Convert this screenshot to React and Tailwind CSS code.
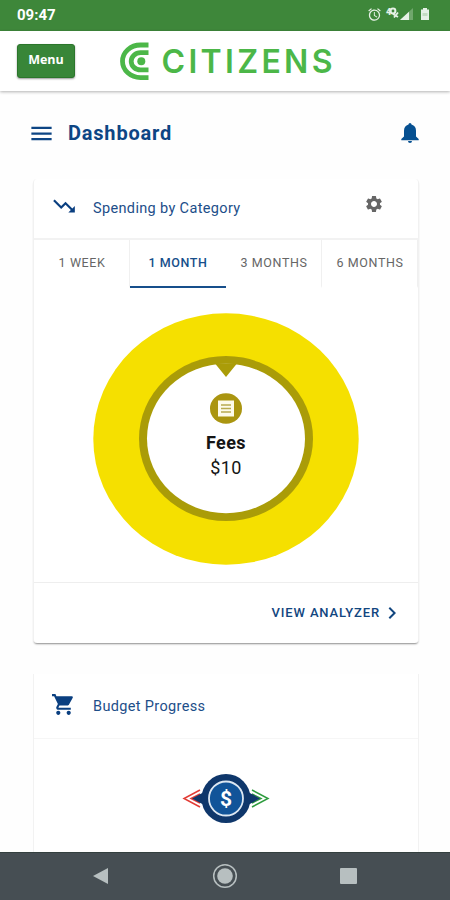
import React from 'react';
import {
  MdAlarm,
  MdMenu,
  MdTrendingDown,
  MdSettings,
  MdChevronRight,
  MdShoppingCart,
} from 'react-icons/md';

const ranges = ['1 WEEK', '1 MONTH', '3 MONTHS', '6 MONTHS'];

function StatusBar() {
  return (
    <div className="flex h-[31px] shrink-0 items-center justify-between bg-[#3e873a] pb-[3px] pl-[17px] pr-[20px] text-white">
      <span className="mt-[2px] text-[15px] font-bold leading-none">09:47</span>
      <div className="flex items-center text-[#e6f1e6]">
        <MdAlarm className="h-[15px] w-[15px]" />
        <svg className="ml-[3px] h-[16px] w-[30px]" viewBox="0 0 30 16">
          <text x="1" y="9" fontSize="9" fontWeight="900" fill="currentColor">4</text>
          <circle cx="8" cy="5" r="2.400" fill="none" stroke="currentColor" strokeWidth="2" />
          <path d="M8 8l5 3M13 6.500l-4 5" stroke="currentColor" strokeWidth="1.800" />
          <path d="M15 14L28 2V14Z" fill="currentColor" opacity="0.3" />
          <path d="M15 14L24 5.700V14Z" fill="currentColor" />
        </svg>
        <svg className="ml-[5px] h-[14px] w-[10px]" viewBox="0 0 10 14">
          <path d="M3 1h4v1.500h2V13H1V2.500h2z" fill="currentColor" />
          <path d="M2.500 6h5v3h-5z" fill="#c3dcc2" />
        </svg>
      </div>
    </div>
  );
}

function Header() {
  return (
    <header className="flex h-[60px] shrink-0 items-center bg-white pl-[17px] shadow-[0_1px_3px_rgba(0,0,0,0.3)]">
      <button className="h-[34px] w-[58px] rounded-[3px] border border-[#2b762b] bg-[#388638] pb-[2px] font-['Open_Sans',sans-serif] text-[12.500px] font-bold text-white shadow-[0_1px_2px_rgba(0,0,0,0.4)]">
        Menu
      </button>
      <svg className="ml-[44px] h-[40px] w-[216px]" viewBox="0 0 216 40" fill="none">
        <g stroke="#4cb748" strokeWidth="4.800">
          <path d="M29.500 4H21.500A18 16.300 0 0 0 21.500 36.600H29.500" />
          <path d="M29.500 11.700H21.500A9.300 8.600 0 0 0 21.500 28.900H29.500" />
        </g>
        <circle cx="22.300" cy="20.300" r="4" fill="#4cb748" />
        <text
          x="42.500"
          y="31.700"
          textLength="171"
          fontFamily="Inter, sans-serif"
          fontSize="32"
          fontWeight="600"
          fill="#4cb748"
        >
          CITIZENS
        </text>
      </svg>
    </header>
  );
}

function SpendingDonut() {
  return (
    <div className="relative h-[252px] w-[266px]">
      <svg className="h-full w-full" viewBox="0 0 266 252">
        <ellipse cx="133" cy="126" rx="132.700" ry="125.700" fill="#f5e000" />
        <ellipse cx="133" cy="125.500" rx="87" ry="82.500" fill="#aa9c08" />
        <ellipse cx="133" cy="125.500" rx="79" ry="74.700" fill="#fff" />
        <path d="M122 50.500H144L133 64Z" fill="#aa9c08" />
      </svg>
      <div className="absolute inset-x-0 top-[80px] flex flex-col items-center text-[#151515]">
        <svg className="h-[31px] w-[32px]" viewBox="0 0 32 31">
          <ellipse cx="16" cy="15.500" rx="16" ry="15.300" fill="#aa9510" />
          <rect x="8" y="7.500" width="16" height="16" fill="#fdfbea" />
          <path d="M11 12h10M11 15.500h10M11 19h10" stroke="#b8aa50" strokeWidth="1.500" />
        </svg>
        <span className="mt-[6px] text-[18px] font-bold leading-[25px] tracking-[0.400px]">Fees</span>
        <span className="text-[18px] leading-[25px] tracking-[0.400px]">$10</span>
      </div>
    </div>
  );
}

function SpendingCard() {
  return (
    <section className="-ml-px flex h-[464px] w-[386px] shrink-0 flex-col rounded-[4px] border-x border-[#f1f1f1] bg-white shadow-[0_2px_2px_-1px_rgba(0,0,0,0.45)]">
      <div className="flex h-[59px] items-center pl-[17px] pr-[34px] text-[#1d4e89]">
        <MdTrendingDown className="mt-[-6px] h-[26px] w-[26px] text-[#0a3f80]" />
        <h2 className="mt-px ml-[16px] flex-1 text-[14.500px] tracking-[0.350px]">Spending by Category</h2>
        <MdSettings className="mt-[-9px] h-[20px] w-[20px] text-[#666]" />
      </div>
      <div className="flex h-[50px] border-t-2 border-[#f2f2f2]">
        {ranges.map((range) => (
          <button
            key={range}
            className={
              range === '1 MONTH'
                ? 'w-[96px] border-b-2 border-[#174f8b] pt-px text-[12.500px] font-medium tracking-[0.600px] text-[#174f8b]'
                : 'w-[96px] border-b-2 border-b-transparent border-r border-r-[#f0f0f0] pt-px pl-px text-[12.500px] tracking-[0.600px] text-[#666]'
            }
          >
            {range}
          </button>
        ))}
      </div>
      <div className="flex flex-1 justify-center pt-[25px]">
        <SpendingDonut />
      </div>
      <div className="flex h-[61px] items-center justify-end border-t border-[#eee] pr-[14px] text-[#12467f]">
        <span className="text-[13px] font-medium tracking-[0.850px]">VIEW ANALYZER</span>
        <MdChevronRight className="h-[24px] w-[24px]" />
      </div>
    </section>
  );
}

function BudgetCard() {
  return (
    <section className="-ml-px mt-[31px] flex h-[178px] w-[386px] shrink-0 flex-col border-x border-[#f2f2f2] bg-white">
      <div className="flex h-[65px] items-center border-b border-[#f6f6f6] pl-[17px]">
        <MdShoppingCart className="mt-[-3px] h-[25px] w-[25px] text-[#0a3f80]" />
        <h2 className="mt-[2px] ml-[17px] text-[14.500px] tracking-[0.350px] text-[#1d4e89]">Budget Progress</h2>
      </div>
      <div className="flex justify-center pt-[34px] pr-[1px]">
        <svg className="h-[52px] w-[92px]" viewBox="0 0 92 52">
          <path d="M20 17L4 25.500L20 34M20 21L11 25.500L20 30" fill="none" stroke="#e23b35" strokeWidth="1.500" />
          <path d="M72 17L88 25.500L72 34M72 21L81 25.500L72 30" fill="none" stroke="#2d9b3d" strokeWidth="1.500" />
          <path d="M12 25.500L26 18V33ZM80 25.500L66 18V33Z" fill="#0f376b" />
          <circle cx="46" cy="25.500" r="24.500" fill="#0f376b" />
          <circle cx="46" cy="25.500" r="17" fill="#115499" stroke="#dce7f2" strokeWidth="1.800" />
          <text x="46" y="33" textAnchor="middle" fontSize="21" fontWeight="700" fill="#fff">$</text>
        </svg>
      </div>
    </section>
  );
}

function NavigationBar() {
  return (
    <nav className="flex h-[48px] shrink-0 items-center border-t border-[#34403f] bg-[#464e53] pb-px pl-[93px] text-[#b7bfc0]">
      <svg className="h-[18px] w-[16px]" viewBox="0 0 16 18">
        <path d="M0 9L15 1V17Z" fill="currentColor" />
      </svg>
      <svg className="ml-[103px] h-[26px] w-[26px]" viewBox="0 0 26 26">
        <circle cx="13" cy="13" r="11.300" fill="none" stroke="currentColor" strokeWidth="1.500" />
        <circle cx="13" cy="13" r="7.800" fill="currentColor" />
      </svg>
      <div className="ml-[102px] h-[16px] w-[17px] rounded-[1px] bg-[#b7bfc0]" />
    </nav>
  );
}

function App() {
  return (
    <div className="flex h-[900px] w-[450px] flex-col overflow-hidden bg-[#fefefe] font-[Roboto,sans-serif]">
      <StatusBar />
      <Header />
      <main className="flex min-h-0 flex-1 flex-col overflow-hidden px-[34px]">
        <div className="-mx-[6px] flex h-[88px] shrink-0 items-center pb-[4px] text-[#0d4584]">
          <MdMenu className="h-[27px] w-[27px]" />
          <h1 className="ml-[13px] flex-1 text-[20px] font-bold tracking-[0.800px]">Dashboard</h1>
          <svg className="mr-[3px] h-[20px] w-[18px] text-[#065091]" viewBox="0 0 18 20">
            <path
              d="M9 0a1.500 1.500 0 0 0-1.500 1.500C4.500 2.300 3 4.700 3 7.800V13.500L.3 16v1.200h17.400V16L15 13.500V7.800c0-3.100-1.500-5.500-4.500-6.300A1.500 1.500 0 0 0 9 0ZM7 18a2 2 0 0 0 4 0Z"
              fill="currentColor"
            />
          </svg>
        </div>
        <SpendingCard />
        <BudgetCard />
      </main>
      <NavigationBar />
    </div>
  );
}

export default App;
